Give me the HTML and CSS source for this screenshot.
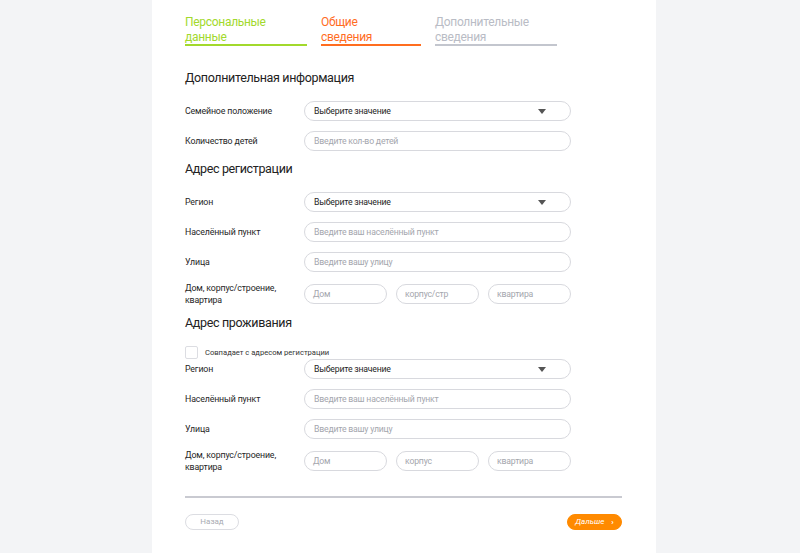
FILE: index.html
```html
<!DOCTYPE html>
<html lang="ru">
<head>
<meta charset="utf-8">
<title>Анкета</title>
<link rel="stylesheet" href="styles.css">
</head>
<body>
<div class="panel">
  <div class="tabs">
    <div class="tab tab-done">Персональные<br>данные</div>
    <div class="tab tab-active">Общие<br>сведения</div>
    <div class="tab tab-next">Дополнительные<br>сведения</div>
  </div>

  <h2 class="heading h-first">Дополнительная информация</h2>
  <div class="rows">
    <div class="row">
      <div class="label">Семейное положение</div>
      <div class="field select"><span>Выберите значение</span><i class="arrow"></i></div>
    </div>
    <div class="row">
      <div class="label">Количество детей</div>
      <div class="field ph">Введите кол-во детей</div>
    </div>
  </div>

  <h2 class="heading">Адрес регистрации</h2>
  <div class="rows">
    <div class="row">
      <div class="label">Регион</div>
      <div class="field select"><span>Выберите значение</span><i class="arrow"></i></div>
    </div>
    <div class="row">
      <div class="label">Населённый пункт</div>
      <div class="field ph">Введите ваш населённый пункт</div>
    </div>
    <div class="row">
      <div class="label">Улица</div>
      <div class="field ph">Введите вашу улицу</div>
    </div>
    <div class="row">
      <div class="label">Дом, корпус/строение,<br>квартира</div>
      <div class="triple">
        <div class="field ph">Дом</div>
        <div class="field ph">корпус/стр<span class="cut">оение</span></div>
        <div class="field ph">квартира</div>
      </div>
    </div>
  </div>

  <h2 class="heading h-third">Адрес проживания</h2>
  <div class="check">
    <span class="box"></span>
    <span class="check-text">Совпадает с адресом регистрации</span>
  </div>
  <div class="rows">
    <div class="row">
      <div class="label">Регион</div>
      <div class="field select"><span>Выберите значение</span><i class="arrow"></i></div>
    </div>
    <div class="row">
      <div class="label">Населённый пункт</div>
      <div class="field ph">Введите ваш населённый пункт</div>
    </div>
    <div class="row">
      <div class="label">Улица</div>
      <div class="field ph">Введите вашу улицу</div>
    </div>
    <div class="row">
      <div class="label">Дом, корпус/строение,<br>квартира</div>
      <div class="triple">
        <div class="field ph">Дом</div>
        <div class="field ph">корпус</div>
        <div class="field ph">квартира</div>
      </div>
    </div>
  </div>

  <div class="divider"></div>
  <div class="actions">
    <button class="btn btn-back">Назад</button>
    <button class="btn btn-next">Дальше <span class="chev">›</span></button>
  </div>
</div>
</body>
</html>
```

FILE: styles.css
```css
html, body {
  margin: 0;
  padding: 0;
}
body {
  background: #f3f4f6;
  font-family: Roboto, "Noto Sans", sans-serif;
  color: #2b2b2b;
}
.panel {
  margin-left: 152px;
  width: 504px;
  min-height: 553px;
  background: #ffffff;
  box-sizing: border-box;
  padding: 15px 34px 0 33px;
}
.tabs {
  display: flex;
  gap: 14px;
}
.tab {
  font-size: 12px;
  letter-spacing: -0.3px;
  line-height: 14.5px;
  border-bottom: 2px solid;
  width: 122px;
}
.tab-done { color: #a2d92c; border-color: #a2d92c; }
.tab-active { color: #ff6d1f; border-color: #ff6d1f; width: 100px; }
.tab-next { color: #b9bcc5; border-color: #c3c6ce; }

.heading {
  margin: 9px 0 14px;
  font-size: 12.5px;
  letter-spacing: -0.35px;
  line-height: 18px;
  font-weight: 400;
  color: #222;
}
.h-first { margin-top: 23px; margin-bottom: 14px; }
.h-third { margin-top: 8px; }

.rows {
  display: flex;
  flex-direction: column;
  gap: 10px;
}
.row {
  display: flex;
  align-items: center;
}
.label {
  width: 119px;
  font-size: 8.8px;
  letter-spacing: -0.15px;
  line-height: 12px;
  color: #262626;
}
.field {
  box-sizing: border-box;
  width: 267px;
  height: 20px;
  border: 1px solid #d8d9de;
  border-radius: 10px;
  padding: 0 9px;
  font-size: 8.7px;
  letter-spacing: -0.2px;
  line-height: 18px;
  white-space: nowrap;
  overflow: hidden;
}
.ph { color: #a4a6ad; }
.select {
  display: flex;
  align-items: center;
  justify-content: space-between;
  color: #1e1e1e;
  padding-right: 24px;
}
.arrow {
  width: 0;
  height: 0;
  border-left: 4px solid transparent;
  border-right: 4px solid transparent;
  border-top: 5px solid #555;
}
.triple {
  display: flex;
  gap: 9px;
}
.triple .field {
  width: 83px;
  padding: 0 8px;
}
.cut { visibility: hidden; }

.check {
  display: flex;
  align-items: center;
  gap: 7px;
  margin-top: 14px;
  margin-bottom: 0;
}
.box {
  box-sizing: border-box;
  width: 13px;
  height: 13px;
  border: 1px solid #dcdde2;
  border-radius: 2px;
}
.check-text {
  font-size: 7.6px;
  color: #333;
}

.divider {
  margin-top: 23px;
  height: 2px;
  background: #c9cad1;
}
.actions {
  display: flex;
  justify-content: space-between;
  margin-top: 16px;
}
.btn {
  box-sizing: border-box;
  height: 16px;
  border-radius: 8px;
  font-family: inherit;
  font-size: 8px;
  line-height: 14px;
  padding: 0;
  cursor: pointer;
}
.btn-back {
  width: 54px;
  background: #fff;
  border: 1px solid #dcdde2;
  color: #a9abb2;
}
.btn-next {
  width: 55px;
  background: #ff8a00;
  border: 1px solid #ff8a00;
  color: #fff;
  font-style: italic;
}
.chev {
  font-style: normal;
  margin-left: 5px;
  font-weight: 700;
}
```
